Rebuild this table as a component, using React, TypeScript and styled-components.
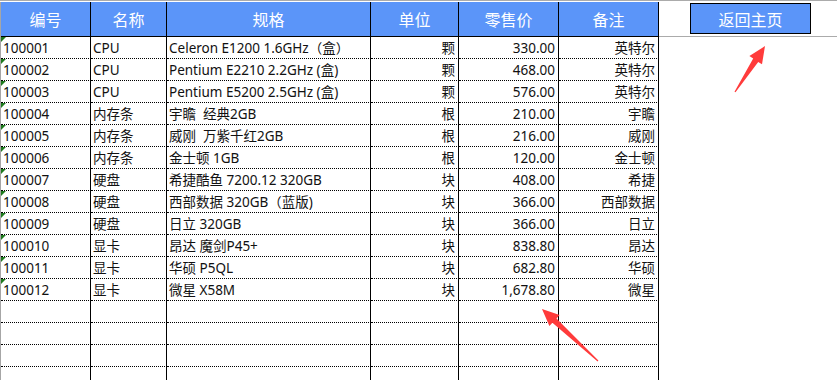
import React from 'react';
import styled, { createGlobalStyle } from 'styled-components';

const GlobalStyle = createGlobalStyle`
    html, body {
        margin: 0;
        padding: 0;
        background: #fff;
    }
    body {
        font-family: "Noto Sans", "Noto Sans CJK SC", sans-serif;
    }
`;

const COLS = [90, 76, 204, 88, 100, 100];
const HEADERS = ['编号', '名称', '规格', '单位', '零售价', '备注'];

const ROWS: string[][] = [
    ['100001', 'CPU', 'Celeron E1200 1.6GHz（盒）', '颗', '330.00', '英特尔'],
    ['100002', 'CPU', 'Pentium E2210 2.2GHz (盒)', '颗', '468.00', '英特尔'],
    ['100003', 'CPU', 'Pentium E5200 2.5GHz (盒)', '颗', '576.00', '英特尔'],
    ['100004', '内存条', '宇瞻  经典2GB', '根', '210.00', '宇瞻'],
    ['100005', '内存条', '威刚  万紫千红2GB', '根', '216.00', '威刚'],
    ['100006', '内存条', '金士顿 1GB', '根', '120.00', '金士顿'],
    ['100007', '硬盘', '希捷酷鱼 7200.12 320GB', '块', '408.00', '希捷'],
    ['100008', '硬盘', '西部数据 320GB（蓝版)', '块', '366.00', '西部数据'],
    ['100009', '硬盘', '日立 320GB', '块', '366.00', '日立'],
    ['100010', '显卡', '昂达 魔剑P45+', '块', '838.80', '昂达'],
    ['100011', '显卡', '华硕 P5QL', '块', '682.80', '华硕'],
    ['100012', '显卡', '微星 X58M', '块', '1,678.80', '微星'],
];

const EMPTY_ROWS = 4;

const Page = styled.div`
    position: relative;
    width: 837px;
    height: 380px;
    overflow: hidden;
    background: #fff;
`;

const TopStrip = styled.div`
    height: 2px;
    box-sizing: border-box;
    border-top: 1px solid #ababab;
`;

const Body = styled.div`
    display: flex;
    align-items: flex-start;
`;

const Sheet = styled.div`
    display: grid;
    grid-template-columns: ${COLS.map((w) => `${w}px`).join(' ')};
    border-left: 1px solid #a6a6a6;
`;

const HeadCell = styled.div`
    box-sizing: border-box;
    height: 35px;
    background: #5b95f9;
    color: #fff;
    border-right: 1px solid #000;
    border-bottom: 1px solid #000;
    display: flex;
    align-items: center;
    justify-content: center;
    font-family: "Noto Sans CJK SC", sans-serif;
    font-size: 16px;
`;

const Cell = styled.div<{ $align?: 'left' | 'right'; $flag?: boolean }>`
    position: relative;
    box-sizing: border-box;
    height: 22px;
    border-right: 1px solid #000;
    border-bottom: 1px dotted #000;
    display: flex;
    align-items: center;
    justify-content: ${(p) => (p.$align === 'right' ? 'flex-end' : 'flex-start')};
    padding: ${(p) => (p.$align === 'right' ? '0 3px 0 0' : '0 0 0 2px')};
    font-size: 13.5px;
    line-height: 20px;
    color: #111;
    white-space: pre;
    overflow: hidden;

    &::before {
        content: '';
        display: ${(p) => (p.$flag ? 'block' : 'none')};
        position: absolute;
        left: 0;
        top: 0;
        width: 0;
        height: 0;
        border-top: 5px solid #1f7a1f;
        border-right: 5px solid transparent;
    }
`;

const Side = styled.div`
    flex: 1;
`;

const SideHead = styled.div`
    box-sizing: border-box;
    height: 35px;
    border-bottom: 1px solid #ababab;
    padding: 1px 0 0 31px;
`;

const HomeButton = styled.button`
    box-sizing: border-box;
    width: 121px;
    height: 31px;
    margin: 0;
    padding: 0;
    background: #5b95f9;
    border: 1px solid #000;
    color: #fff;
    font-family: "Noto Sans CJK SC", sans-serif;
    font-size: 16px;
    cursor: pointer;
`;

const Overlay = styled.svg`
    position: absolute;
    left: 0;
    top: 0;
    pointer-events: none;
`;

type Pt = [number, number];

// tapered arrow: thin at the tail, arrowhead at the tip
const arrowPoints = (tip: Pt, tail: Pt) => {
    const dx = tip[0] - tail[0];
    const dy = tip[1] - tail[1];
    const len = Math.hypot(dx, dy);
    const d: Pt = [dx / len, dy / len];
    const n: Pt = [-d[1], d[0]];
    const headLen = 17;
    const headHalf = 7.5;
    const neck = 3;
    const b: Pt = [tip[0] - d[0] * headLen, tip[1] - d[1] * headLen];
    const at = (p: Pt, k: number): string => `${(p[0] + n[0] * k).toFixed(1)},${(p[1] + n[1] * k).toFixed(1)}`;
    return [
        `${tip[0]},${tip[1]}`,
        at(b, headHalf),
        at(b, neck),
        at(tail, 0.6),
        at(tail, -0.6),
        at(b, -neck),
        at(b, -headHalf),
    ].join(' ');
};

const Arrow = ({ tip, tail }: { tip: Pt; tail: Pt }) => (
    <polygon points={arrowPoints(tip, tail)} fill="#ff3b3b" />
);

const App = (): React.ReactElement => {
    const align = (i: number): 'left' | 'right' => (i >= 3 ? 'right' : 'left');

    return (
        <>
            <GlobalStyle />
            <Page>
                <TopStrip />
                <Body>
                    <Sheet>
                        {HEADERS.map((h) => (
                            <HeadCell key={h}>{h}</HeadCell>
                        ))}
                        {ROWS.map((row, r) =>
                            row.map((v, i) => (
                                <Cell key={`${r}-${i}`} $align={align(i)} $flag={i === 0}>
                                    {v}
                                </Cell>
                            ))
                        )}
                        {Array.from({ length: EMPTY_ROWS }).map((_, r) =>
                            COLS.map((_w, i) => <Cell key={`e${r}-${i}`} />)
                        )}
                    </Sheet>
                    <Side>
                        <SideHead>
                            <HomeButton>返回主页</HomeButton>
                        </SideHead>
                    </Side>
                </Body>
                <Overlay width={837} height={380}>
                    <Arrow tip={[765, 46]} tail={[735, 92]} />
                    <Arrow tip={[542, 309]} tail={[598, 361]} />
                </Overlay>
            </Page>
        </>
    );
};

export default App;
